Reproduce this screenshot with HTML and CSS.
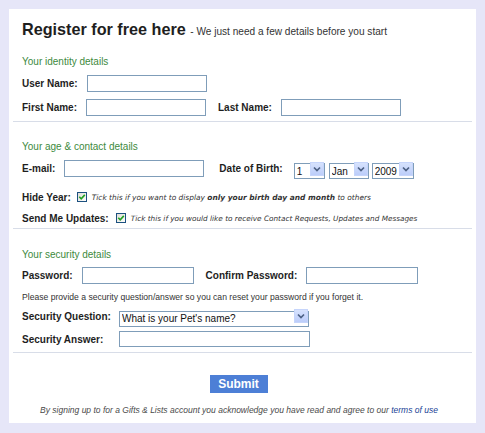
FILE: index.html
```html
<!DOCTYPE html>
<html>
<head>
<meta charset="utf-8">
<link rel="stylesheet" href="styles.css">
</head>
<body>
<div class="panel">
  <h1 class="title">Register for free here <span class="sub">- We just need a few details before you start</span></h1>

  <div class="section">
    <div class="head h1st">Your identity details</div>
    <div class="row r-user"><label class="lbl">User Name:</label><input class="txt w120" type="text"></div>
    <div class="row r-first"><label class="lbl">First Name:</label><input class="txt w120" type="text"><label class="lbl l-last">Last Name:</label><input class="txt w120" type="text"></div>
  </div>
  <div class="sep sep1"></div>

  <div class="section">
    <div class="head h2nd">Your age &amp; contact details</div>
    <div class="row r-email"><label class="lbl">E-mail:</label><input class="txt w140" type="text">
      <label class="lbl l-dob">Date of Birth:</label>
      <span class="sel w31"><select><option>1</option></select><span class="sel-btn"><svg width="14" height="14" viewBox="0 0 14 14"><path d="M4 5.5 L7 8.5 L10 5.5" fill="none" stroke="#4d6185" stroke-width="1.7"/></svg></span></span>
      <span class="sel w40 g4"><select><option>Jan</option></select><span class="sel-btn"><svg width="14" height="14" viewBox="0 0 14 14"><path d="M4 5.5 L7 8.5 L10 5.5" fill="none" stroke="#4d6185" stroke-width="1.7"/></svg></span></span>
      <span class="sel w42 g3"><select><option>2009</option></select><span class="sel-btn"><svg width="14" height="14" viewBox="0 0 14 14"><path d="M4 5.5 L7 8.5 L10 5.5" fill="none" stroke="#4d6185" stroke-width="1.7"/></svg></span></span>
    </div>
    <div class="row r-hide"><label class="lbl l-hide">Hide Year:</label>
      <span class="chk"><svg width="10" height="10" viewBox="0 0 10 10"><defs><linearGradient id="cg" x1="0" y1="0" x2="1" y2="1"><stop offset="0" stop-color="#dcdcd4"/><stop offset="1" stop-color="#ffffff"/></linearGradient></defs><rect x="0.5" y="0.5" width="9" height="9" fill="url(#cg)" stroke="#1c5180"/><path d="M2.3 4.8 L4.2 6.8 L7.8 2.9" fill="none" stroke="#21a121" stroke-width="1.6"/></svg></span>
      <span class="note n1">Tick this if you want to display <b>only your birth day and month</b> to others</span>
    </div>
    <div class="row r-send"><label class="lbl l-send">Send Me Updates:</label>
      <span class="chk"><svg width="10" height="10" viewBox="0 0 10 10"><rect x="0.5" y="0.5" width="9" height="9" fill="url(#cg)" stroke="#1c5180"/><path d="M2.3 4.8 L4.2 6.8 L7.8 2.9" fill="none" stroke="#21a121" stroke-width="1.6"/></svg></span>
      <span class="note n2">Tick this if you would like to receive Contact Requests, Updates and Messages</span>
    </div>
  </div>
  <div class="sep sep2"></div>

  <div class="section">
    <div class="head h3rd">Your security details</div>
    <div class="row r-pass"><label class="lbl">Password:</label><input class="txt w112" type="password"><label class="lbl l-conf">Confirm Password:</label><input class="txt w112" type="password"></div>
    <div class="hint">Please provide a security question/answer so you can reset your password if you forget it.</div>
    <div class="row r-q"><label class="lbl lfix">Security Question:</label>
      <span class="sel w190"><select><option>What is your Pet's name?</option></select><span class="sel-btn"><svg width="14" height="14" viewBox="0 0 14 14"><path d="M4 5.5 L7 8.5 L10 5.5" fill="none" stroke="#4d6185" stroke-width="1.7"/></svg></span></span>
    </div>
    <div class="row r-a"><label class="lbl lfix">Security Answer:</label><input class="txt w191 h16" type="text"></div>
  </div>
  <div class="sep sep3"></div>

  <div class="actions"><button class="submit" type="button">Submit</button></div>
  <p class="footer">By signing up to for a Gifts &amp; Lists account you acknowledge you have read and agree to our <a href="#" class="terms">terms of use</a></p>
</div>
</body>
</html>
```

FILE: styles.css
```css
html, body {
  margin: 0;
  padding: 0;
}
body {
  background: #e6e6f8;
  width: 485px;
  height: 433px;
  overflow: hidden;
  font-family: "Liberation Sans", Arial, sans-serif;
  color: #222;
}
.panel {
  box-sizing: border-box;
  margin: 9px 0 0 9px;
  width: 467px;
  height: 414px;
  background: #fff;
  padding: 10px 4px 0 4px;
}
.title {
  margin: 0 0 0 9px;
  font-size: 16.2px;
  line-height: 20px;
  height: 20px;
  font-weight: bold;
  color: #1e1e1e;
  white-space: nowrap;
}
.sub {
  font-size: 10.1px;
  font-weight: normal;
  color: #333;
}
.section {
  padding-left: 9px;
}
.head {
  font-size: 10px;
  line-height: 14px;
  height: 14px;
  color: #3d8a3d;
}
.h1st { margin-top: 16px; }
.h2nd { margin-top: 18px; }
.h3rd { margin-top: 19px; }
.row {
  display: flex;
  align-items: center;
  height: 17px;
  white-space: nowrap;
}
.r-user { margin-top: 6px; }
.r-first { margin-top: 7px; }
.r-email { margin-top: 6px; }
.r-hide { margin-top: 13px; height: 14px; }
.r-send { margin-top: 7px; height: 14px; }
.r-pass { margin-top: 5px; }
.r-q { margin-top: 5px; height: 16px; }
.r-a { margin-top: 7px; height: 16px; }
.lbl {
  font-size: 10px;
  font-weight: bold;
  color: #1e1e1e;
  margin-right: 9px;
}
.l-last { margin-left: 12px; }
.l-dob { margin-left: 15px; margin-right: 11px; }
.l-conf { margin-left: 12px; }
.l-hide { margin-right: 6px; }
.l-send { margin-right: 7px; }
.lfix { width: 97px; margin-right: 0; }
.txt {
  box-sizing: border-box;
  height: 17px;
  border: 1px solid #7f9db9;
  background: #fff;
  padding: 0 3px;
  margin: 0;
  font-family: "Liberation Sans", Arial, sans-serif;
  font-size: 10px;
}
.h16 { height: 16px; }
.w112 { width: 112px; }
.w120 { width: 120px; }
.w140 { width: 140px; }
.w191 { width: 191px; }
.sel {
  position: relative;
  display: inline-block;
  height: 16px;
}
.sel select {
  appearance: none;
  -webkit-appearance: none;
  box-sizing: border-box;
  width: 100%;
  height: 100%;
  margin: 0;
  border: 1px solid #7f9db9;
  border-radius: 0;
  background: #fff;
  padding: 0 0 0 2px;
  font-family: "Liberation Sans", Arial, sans-serif;
  font-size: 10px;
  color: #111;
}
.sel-btn {
  position: absolute;
  top: 1px;
  right: 1px;
  width: 14px;
  height: 14px;
  box-sizing: border-box;
  background: linear-gradient(#d6e2fd, #bccdfa);
  border: 1px solid #c6d5fb;
}
.sel-btn svg {
  position: absolute;
  left: -1px;
  top: -1px;
}
.w31 { width: 31px; }
.w40 { width: 40px; }
.w42 { width: 42px; }
.w190 { width: 190px; }
.g4 { margin-left: 4px; }
.g3 { margin-left: 3px; }
.chk {
  display: inline-flex;
  width: 10px;
  height: 10px;
  margin-right: 5px;
}
.note {
  font-family: "DejaVu Sans", Verdana, sans-serif;
  font-style: italic;
  color: #333;
}
.n1 { font-size: 7.45px; }
.n2 { font-size: 7.3px; }
.note b {
  font-weight: bold;
}
.hint {
  margin-top: 7px;
  font-size: 8.6px;
  line-height: 12px;
  height: 12px;
  color: #333;
  white-space: nowrap;
}
.sep {
  height: 1px;
  background: #d8dde8;
}
.sep1 { margin-top: 5px; }
.sep2 { margin-top: 3px; }
.sep3 { margin-top: 5px; }
.actions {
  display: flex;
  justify-content: center;
  margin-top: 22px;
  padding-right: 8px;
}
.submit {
  width: 58px;
  height: 18px;
  border: 0;
  padding: 0;
  margin: 0;
  background: #4d7fd6;
  color: #fff;
  font-family: "Liberation Sans", Arial, sans-serif;
  font-size: 12px;
  font-weight: bold;
  line-height: 18px;
}
.footer {
  margin: 11px 0 0 0;
  padding-right: 7px;
  text-align: center;
  font-size: 8.5px;
  line-height: 12px;
  font-style: italic;
  color: #4a4a4a;
  white-space: nowrap;
}
.terms {
  color: #1a3f96;
  text-decoration: none;
}
```
